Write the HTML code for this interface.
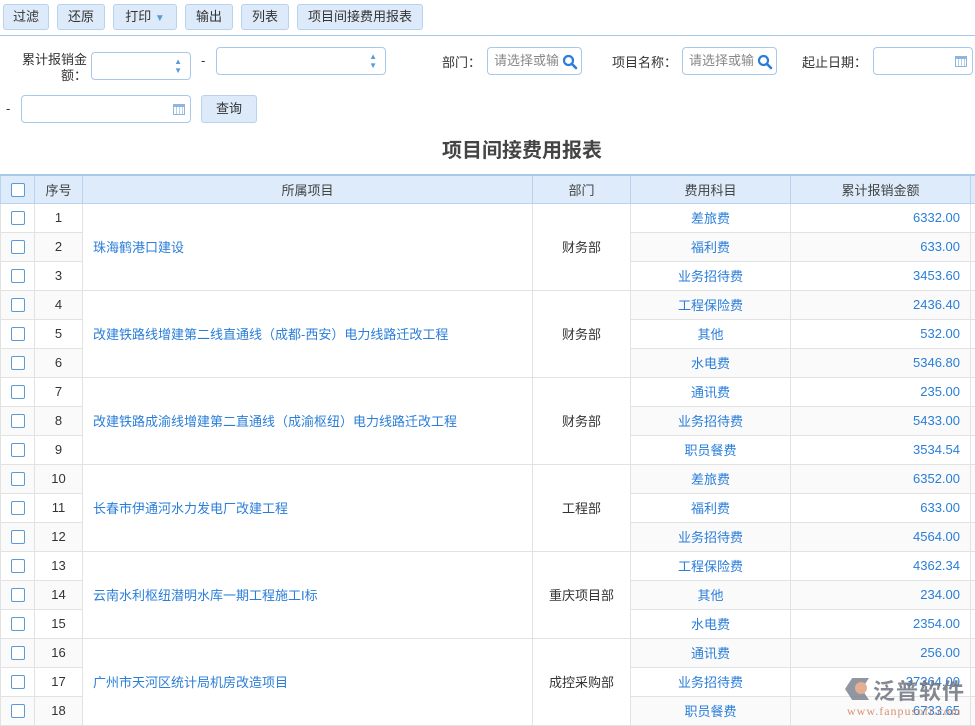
<!DOCTYPE html><html><head><meta charset="utf-8"><style>
*{box-sizing:border-box;margin:0;padding:0}
body{width:975px;height:724px;overflow:hidden;background:#fff;font-family:"Liberation Sans","Noto Sans CJK SC",sans-serif;font-size:13px;color:#333;position:relative}
.btn{position:absolute;top:4px;height:26px;background:#ddeafa;border:1px solid #b9d3ee;border-radius:3px;line-height:24px;text-align:center;color:#333}
.hr{position:absolute;left:0;top:35px;width:975px;border-top:1px solid #a9c9ea}
.lbl{position:absolute;color:#333}
.inp{position:absolute;height:28px;border:1px solid #a9c9ea;border-radius:4px;background:#fff;color:#888;line-height:26px;padding-left:6px}
.sp{position:absolute;right:8px;color:#5b9bd5;font-size:8px;line-height:9px}
.cal{position:absolute;right:5px;top:8px;width:12px;height:11px;border:1px solid #8fb4e0;border-top:3px solid #8fb4e0;background:repeating-linear-gradient(90deg,#fff 0 2px,#b8cfe9 2px 3px)}
.mag{position:absolute;right:3px;top:6px}
table{position:absolute;left:0;top:174px;border-collapse:collapse;table-layout:fixed;width:975px}
td,th{border:1px solid #e2e2e2;height:29px;text-align:center;font-weight:normal}
th{background:#ddebfa;border-color:#b9d3ee;color:#444;height:28px}
thead tr{border-top:2px solid #a9c9ea}
.cb{display:inline-block;width:14px;height:14px;border:1.5px solid #5b9bd5;border-radius:2px;vertical-align:middle;background:#fff}
.b{color:#2a7ed8}
.p{text-align:left;padding-left:10px;color:#2a7ed8;background:#fff}
.r{text-align:right;padding-right:10px;color:#2a7ed8}
tbody tr:nth-child(even) td{background:#fafafa}
tbody td.p,tbody td.d{background:#fff!important}
</style></head><body>
<div class="btn" style="left:3px;width:46px">过滤</div>
<div class="btn" style="left:57px;width:48px">还原</div>
<div class="btn" style="left:113px;width:64px">打印 <span style="color:#5b9bd5;font-size:10px">▼</span></div>
<div class="btn" style="left:185px;width:48px">输出</div>
<div class="btn" style="left:241px;width:48px">列表</div>
<div class="btn" style="left:297px;width:126px">项目间接费用报表</div>
<div class="hr"></div>
<div class="lbl" style="left:21px;top:52px;width:66px;text-align:right;line-height:16px">累计报销金额：</div>
<div class="inp" style="left:91px;top:52px;width:100px"><span class="sp" style="top:4px">▲<br>▼</span></div>
<div class="lbl" style="left:201px;top:53px">-</div>
<div class="inp" style="left:216px;top:47px;width:170px"><span class="sp" style="top:4px">▲<br>▼</span></div>
<div class="lbl" style="left:442px;top:52px">部门：</div>
<div class="inp" style="left:487px;top:47px;width:95px">请选择或输<svg class="mag" width="16" height="16" viewBox="0 0 16 16"><circle cx="6.5" cy="6.5" r="4.5" fill="none" stroke="#2a7ed8" stroke-width="2.2"/><path d="M10 10l4 4" stroke="#2a7ed8" stroke-width="2.6" stroke-linecap="round"/></svg></div>
<div class="lbl" style="left:612px;top:52px">项目名称：</div>
<div class="inp" style="left:682px;top:47px;width:95px">请选择或输<svg class="mag" width="16" height="16" viewBox="0 0 16 16"><circle cx="6.5" cy="6.5" r="4.5" fill="none" stroke="#2a7ed8" stroke-width="2.2"/><path d="M10 10l4 4" stroke="#2a7ed8" stroke-width="2.6" stroke-linecap="round"/></svg></div>
<div class="lbl" style="left:802px;top:52px">起止日期：</div>
<div class="inp" style="left:873px;top:47px;width:100px"><span class="cal"></span></div>
<div class="lbl" style="left:6px;top:101px">-</div>
<div class="inp" style="left:21px;top:95px;width:170px"><span class="cal"></span></div>
<div class="btn" style="left:201px;top:95px;width:56px;height:28px;line-height:26px">查询</div>
<div style="position:absolute;left:0;top:134px;width:1044px;text-align:center;font-size:20px;font-weight:bold;color:#444">项目间接费用报表</div>
<table><colgroup><col style="width:34px"><col style="width:48px"><col style="width:450px"><col style="width:98px"><col style="width:160px"><col style="width:180px"><col style="width:5px"></colgroup>
<thead><tr><th><span class="cb"></span></th><th>序号</th><th>所属项目</th><th>部门</th><th>费用科目</th><th>累计报销金额</th><th></th></tr></thead>
<tbody>
<tr><td><span class="cb"></span></td><td>1</td><td class="p" rowspan="3">珠海鹤港口建设</td><td class="d" rowspan="3">财务部</td><td class="b">差旅费</td><td class="r">6332.00</td><td></td></tr>
<tr><td><span class="cb"></span></td><td>2</td><td class="b">福利费</td><td class="r">633.00</td><td></td></tr>
<tr><td><span class="cb"></span></td><td>3</td><td class="b">业务招待费</td><td class="r">3453.60</td><td></td></tr>
<tr><td><span class="cb"></span></td><td>4</td><td class="p" rowspan="3">改建铁路线增建第二线直通线（成都-西安）电力线路迁改工程</td><td class="d" rowspan="3">财务部</td><td class="b">工程保险费</td><td class="r">2436.40</td><td></td></tr>
<tr><td><span class="cb"></span></td><td>5</td><td class="b">其他</td><td class="r">532.00</td><td></td></tr>
<tr><td><span class="cb"></span></td><td>6</td><td class="b">水电费</td><td class="r">5346.80</td><td></td></tr>
<tr><td><span class="cb"></span></td><td>7</td><td class="p" rowspan="3">改建铁路成渝线增建第二直通线（成渝枢纽）电力线路迁改工程</td><td class="d" rowspan="3">财务部</td><td class="b">通讯费</td><td class="r">235.00</td><td></td></tr>
<tr><td><span class="cb"></span></td><td>8</td><td class="b">业务招待费</td><td class="r">5433.00</td><td></td></tr>
<tr><td><span class="cb"></span></td><td>9</td><td class="b">职员餐费</td><td class="r">3534.54</td><td></td></tr>
<tr><td><span class="cb"></span></td><td>10</td><td class="p" rowspan="3">长春市伊通河水力发电厂改建工程</td><td class="d" rowspan="3">工程部</td><td class="b">差旅费</td><td class="r">6352.00</td><td></td></tr>
<tr><td><span class="cb"></span></td><td>11</td><td class="b">福利费</td><td class="r">633.00</td><td></td></tr>
<tr><td><span class="cb"></span></td><td>12</td><td class="b">业务招待费</td><td class="r">4564.00</td><td></td></tr>
<tr><td><span class="cb"></span></td><td>13</td><td class="p" rowspan="3">云南水利枢纽潜明水库一期工程施工I标</td><td class="d" rowspan="3">重庆项目部</td><td class="b">工程保险费</td><td class="r">4362.34</td><td></td></tr>
<tr><td><span class="cb"></span></td><td>14</td><td class="b">其他</td><td class="r">234.00</td><td></td></tr>
<tr><td><span class="cb"></span></td><td>15</td><td class="b">水电费</td><td class="r">2354.00</td><td></td></tr>
<tr><td><span class="cb"></span></td><td>16</td><td class="p" rowspan="3">广州市天河区统计局机房改造项目</td><td class="d" rowspan="3">成控采购部</td><td class="b">通讯费</td><td class="r">256.00</td><td></td></tr>
<tr><td><span class="cb"></span></td><td>17</td><td class="b">业务招待费</td><td class="r">37364.00</td><td></td></tr>
<tr><td><span class="cb"></span></td><td>18</td><td class="b">职员餐费</td><td class="r">6733.65</td><td></td></tr>
</tbody></table>
<div style="position:absolute;left:845px;top:674px;width:130px;height:50px;opacity:.85">
<div style="position:absolute;left:0;top:4px;width:24px;height:22px;background:#7d8593;clip-path:polygon(30% 0,100% 0,70% 50%,100% 100%,30% 100%,0 50%)"></div>
<div style="position:absolute;left:10px;top:8px;width:12px;height:12px;border-radius:50%;background:#e0a080"></div>
<div style="position:absolute;left:28px;top:0px;font-size:22px;font-weight:bold;color:#6e7480;letter-spacing:1px">泛普软件</div>
<div style="position:absolute;left:2px;top:30px;font-family:'Liberation Serif',serif;font-size:12px;color:#d08060;letter-spacing:1px">www.fanpusoft.com</div>
</div>
</body></html>
